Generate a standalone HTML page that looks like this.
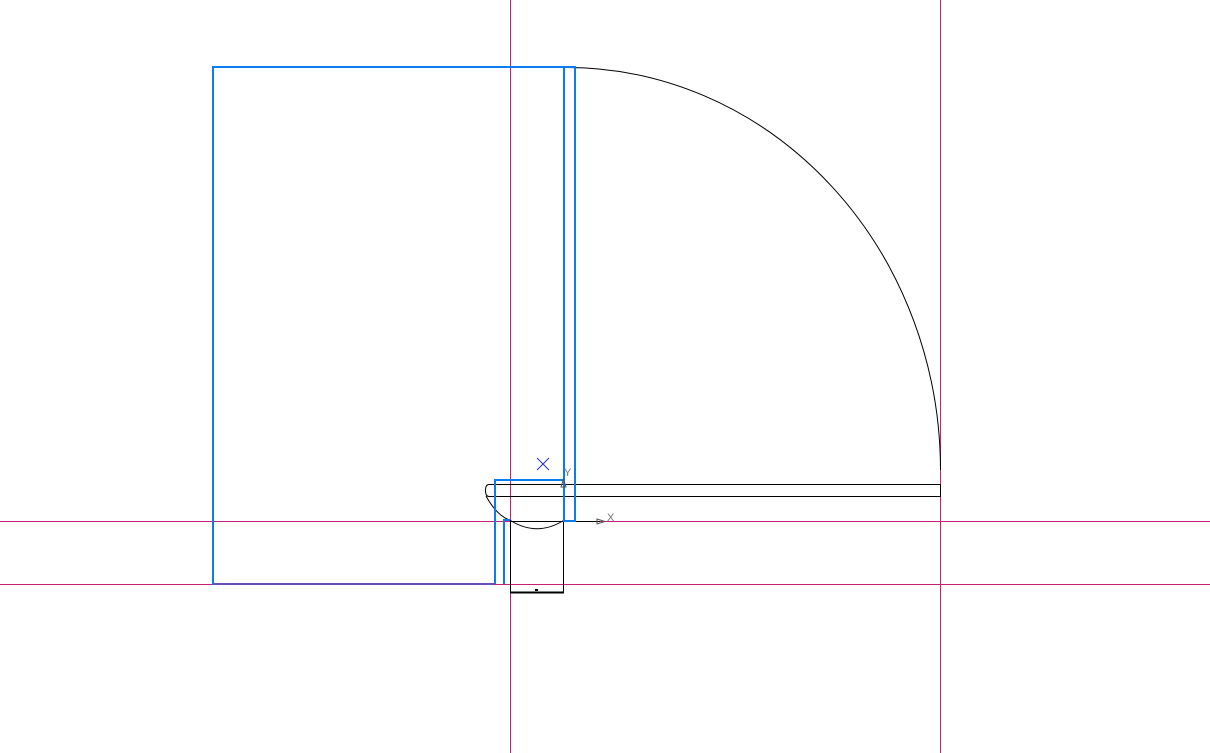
<!DOCTYPE html>
<html><head><style>html,body{margin:0;padding:0;background:#fff;width:1210px;height:753px;overflow:hidden}</style></head>
<body>
<svg width="1210" height="753" viewBox="0 0 1210 753" xmlns="http://www.w3.org/2000/svg" style="display:block">
<g stroke="#c8207a" stroke-width="1" fill="none">
<line x1="510.5" y1="0" x2="510.5" y2="753"/>
<line x1="940.5" y1="0" x2="940.5" y2="753"/>
<line x1="0" y1="521.5" x2="1210" y2="521.5"/>
<line x1="0" y1="584.5" x2="1210" y2="584.5"/>
</g>
<g stroke="#000" stroke-width="1" fill="none">
<path d="M566 67.5 A374 403 0 0 1 940.5 470"/>
<path d="M489 484.5 H940.5 V496.5 H489 Q485.5 496.5 485.5 490.5 Q485.5 484.5 489 484.5"/>
<path d="M486 496 Q497 516 510.5 520.5 Q537 537 563.5 520.5"/>
<line x1="563.5" y1="521.5" x2="600" y2="521.5"/>
<rect x="510.5" y="521.5" width="53" height="71"/>
<line x1="563.5" y1="478" x2="563.5" y2="521"/>
</g>
<line x1="510" y1="592.5" x2="564" y2="592.5" stroke="#000" stroke-width="2"/>
<rect x="535" y="589" width="3" height="2" fill="#000"/>
<g stroke="#0a7cf0" stroke-width="2" fill="none">
<path d="M494 584 H213 V67 H575 V521 H564 V67"/>
<path d="M495 584 V480 H564"/>
<path d="M504 584 V520 H510"/>
<line x1="213" y1="584" x2="495" y2="584" stroke="#c8207a" stroke-width="1"/>
</g>
<g stroke="#2030e0" stroke-width="1">
<line x1="537" y1="458" x2="549" y2="470"/><line x1="549" y1="458" x2="537" y2="470"/>
</g>
<g stroke="#555" stroke-width="1" fill="none">
<path d="M561 487 L563.5 479 L566 487 Z"/>
<path d="M597 519 L605 521.5 L597 524 Z"/>
</g>
<text x="564" y="476" font-family="Liberation Sans, sans-serif" font-size="11" fill="#777">Y</text>
<text x="607" y="521" font-family="Liberation Sans, sans-serif" font-size="11" fill="#777">X</text>
</svg>
</body></html>
